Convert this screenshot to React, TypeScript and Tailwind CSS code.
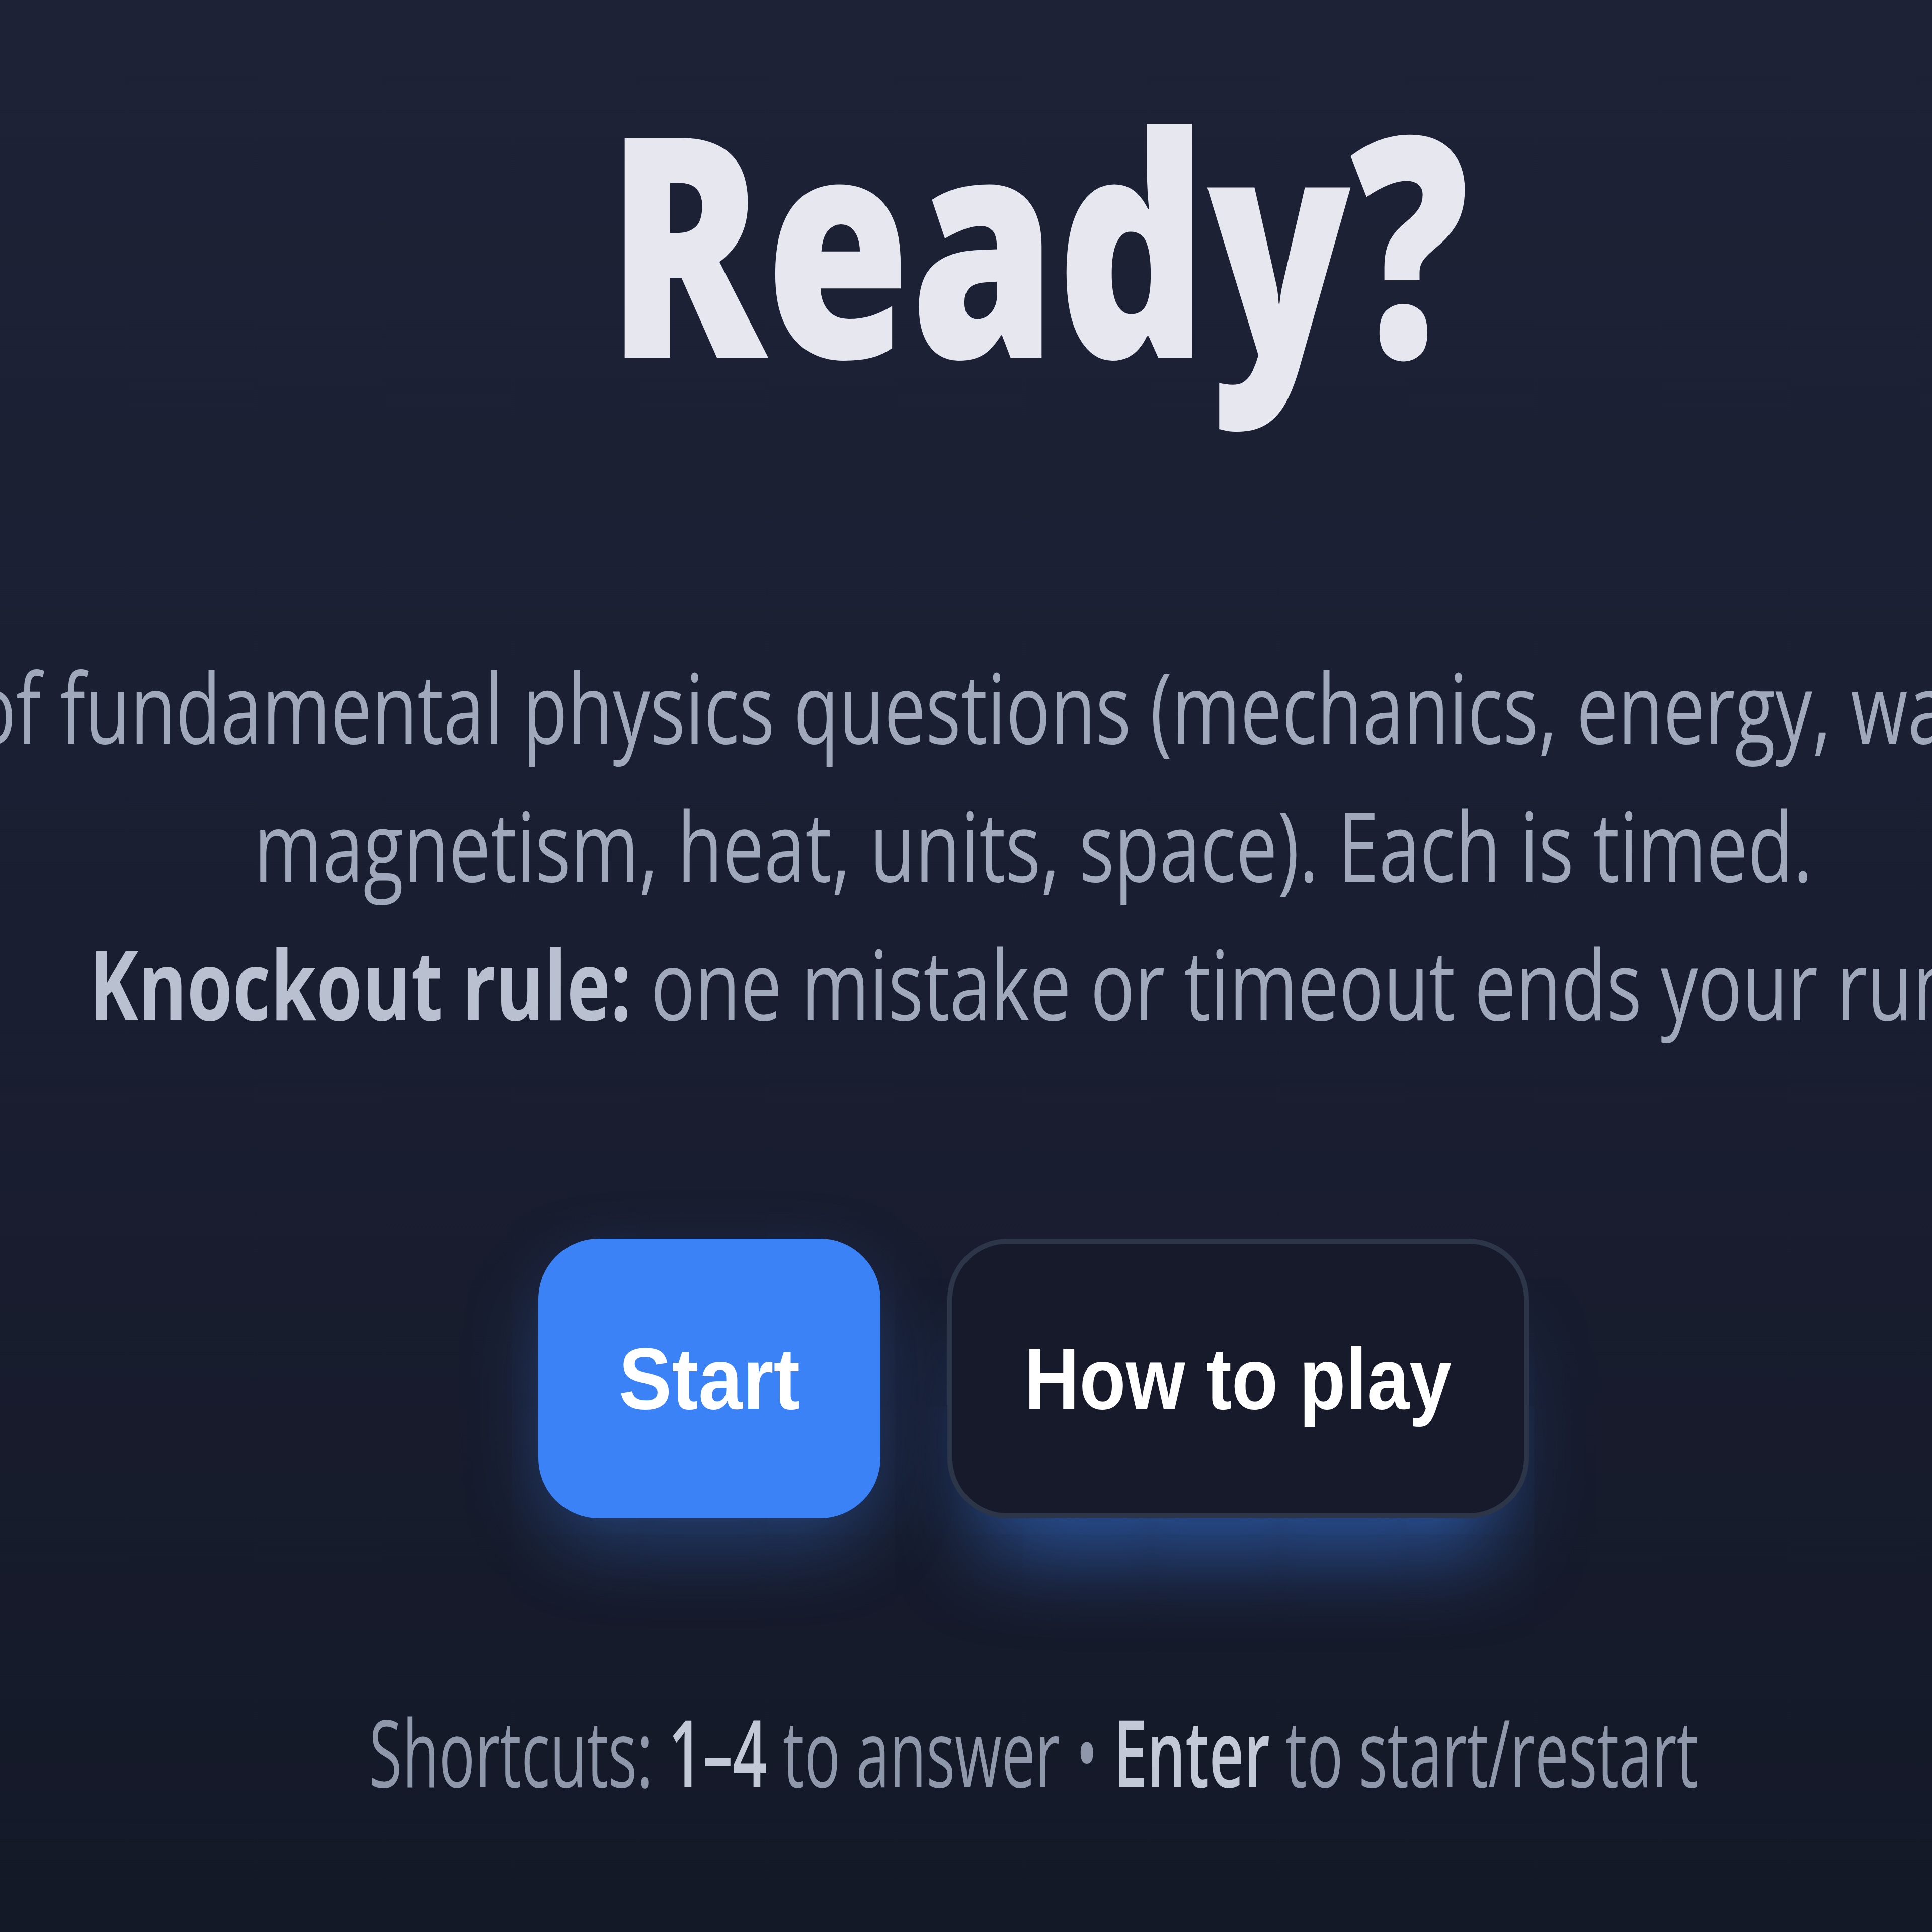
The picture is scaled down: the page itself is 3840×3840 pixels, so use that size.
import React from "react";

export default function App() {
  return (
    <div className="w-[3840px] min-h-[3840px] overflow-hidden bg-linear-to-b from-[#1e2236] via-[#1a1e31] to-[#141928] font-['Open_Sans','Noto_Sans',sans-serif]">
      <main className="flex flex-col items-center pl-[268px] pt-[168px]">
        <h1 className="ml-[18px] whitespace-nowrap text-[612px] leading-none font-extrabold text-[#e7e8ef] scale-x-[0.762]">
          Ready?
        </h1>

        <div className="mt-[486px] flex flex-col items-center text-[192px] leading-[275px] text-[#a0a8bc]">
          <span className="whitespace-nowrap scale-x-[0.765]">
            A quick run of fundamental physics questions (mechanics, energy, waves, electricity &amp;
          </span>
          <span className="whitespace-nowrap scale-x-[0.765]">
            magnetism, heat, units, space). Each is timed.
          </span>
          <span className="whitespace-nowrap scale-x-[0.765]">
            <b className="font-bold text-[#b9c0cf]">Knockout rule:</b> one mistake or timeout ends your run.
          </span>
        </div>

        <div className="mt-[371px] flex items-center gap-[133px] font-['Liberation_Sans',Arial,sans-serif]">
          <button className="flex h-[556px] w-[680px] items-center justify-center rounded-[120px] border-[10px] border-[#3b82f6] bg-[#3b82f6] text-[172px] leading-none font-bold text-white shadow-[0_60px_160px_-20px_rgba(59,130,246,0.4)]">
            <span className="whitespace-nowrap scale-x-[0.92]">Start</span>
          </button>
          <button className="flex h-[556px] w-[1156px] items-center justify-center rounded-[120px] border-[10px] border-[#2d3549] bg-[#161a2b] text-[172px] leading-none font-bold text-white shadow-[0_130px_170px_-70px_rgba(59,130,246,0.6)]">
            <span className="whitespace-nowrap scale-x-[0.88]">How to play</span>
          </button>
        </div>

        <p className="mt-[370px] whitespace-nowrap text-[185px] leading-none text-[#8f97ab] scale-x-[0.646]">
          Shortcuts: <b className="font-semibold text-[#c3c9d7]">1–4</b> to answer • <b className="font-semibold text-[#c3c9d7]">Enter</b> to start/restart
        </p>
      </main>
    </div>
  );
}
